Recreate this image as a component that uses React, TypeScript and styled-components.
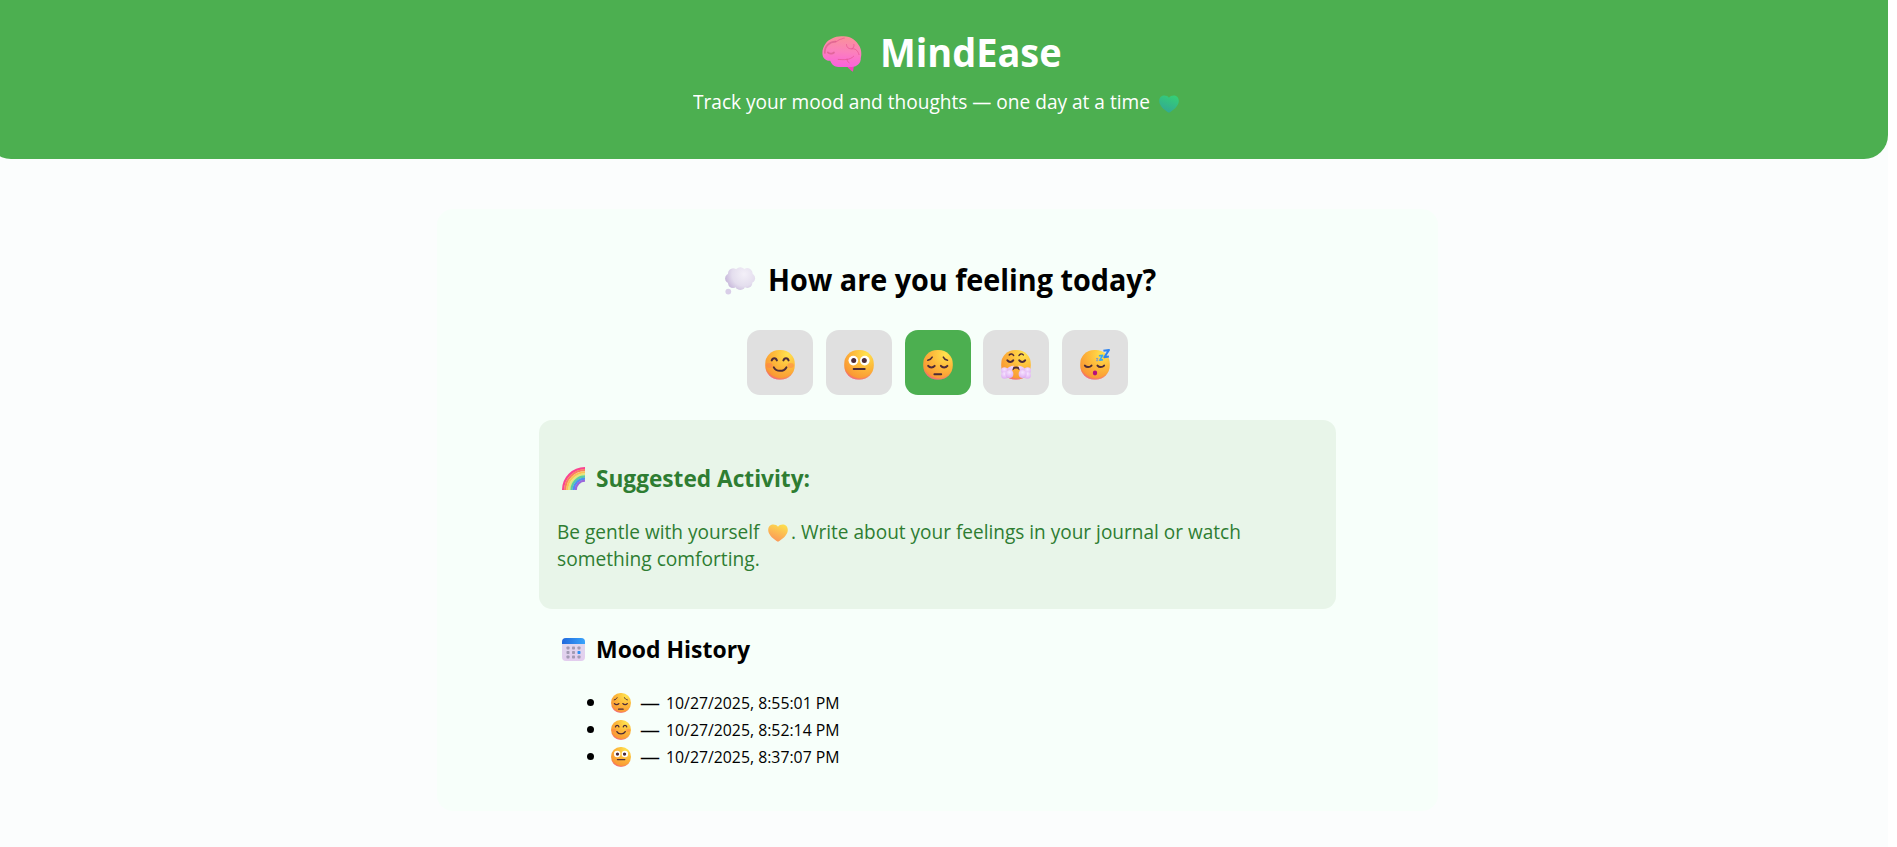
import React, { useLayoutEffect, useRef, useState } from "react";
import styled, { createGlobalStyle } from "styled-components";

const GlobalStyle = createGlobalStyle`
  * { box-sizing: border-box; }
  html, body { margin: 0; background: #fff; overflow: hidden; }
  body { font-family: "Open Sans", "Noto Sans", sans-serif; color: #000; }
`;

const Page = styled.div`
  width: 1888px;
  height: 847px;
  background: #fbfdfd;
`;

const Header = styled.header`
  display: flex;
  flex-direction: column;
  align-items: center;
  width: 1901px;
  height: 159px;
  margin-left: -13px;
  padding-top: 25px;
  border-radius: 0 0 24px 24px;
  background: #4caf50;
  color: #fff;
`;

const LineBox = styled.span<{ $w: number; $size: number; $bold?: boolean }>`
  display: block;
  flex: none;
  width: ${(p) => p.$w}px;
  font-size: ${(p) => p.$size}px;
  font-weight: ${(p) => (p.$bold ? 700 : 400)};
  line-height: inherit;
  white-space: nowrap;
`;

const LineText = styled.span`
  display: inline-block;
  vertical-align: top;
  transform-origin: 0 50%;
`;

/* A single line of text, condensed so that it fills exactly the given width. */
function Line({ w, size, bold, children }: { w: number; size: number; bold?: boolean; children: React.ReactNode }) {
  const ref = useRef<HTMLSpanElement>(null);
  const [scale, setScale] = useState(1);
  useLayoutEffect(() => {
    if (ref.current && ref.current.offsetWidth) setScale(w / ref.current.offsetWidth);
  }, [w]);
  return (
    <LineBox $w={w} $size={size} $bold={bold}>
      <LineText ref={ref} style={{ transform: `scaleX(${scale})` }}>{children}</LineText>
    </LineBox>
  );
}

const Brand = styled.h1`
  display: flex;
  align-items: center;
  gap: 18px;
  height: 54px;
  margin: 0;
  padding-left: 9px;
  line-height: 54px;
`;

const Tagline = styled.p`
  display: flex;
  align-items: center;
  gap: 9px;
  height: 27px;
  margin: 9px 0 0;
  padding-right: 3px;
  line-height: 27px;
`;

const Main = styled.main`
  width: 1001px;
  height: 602px;
  margin: 50px 0 0 437px;
  padding: 51px 102px 0;
  border-radius: 16px;
  background: #f7fffa;
`;

const Question = styled.h2`
  display: flex;
  align-items: center;
  justify-content: center;
  gap: 12px;
  height: 40px;
  margin: 0 0 30px;
  padding-left: 6px;
  line-height: 40px;
`;

const Moods = styled.div`
  display: flex;
  justify-content: center;
  gap: 12.8px;
`;

const MoodButton = styled.button<{ $active?: boolean }>`
  display: flex;
  align-items: center;
  justify-content: center;
  width: 66px;
  height: 65px;
  padding: 4px 0 0;
  border: 0;
  border-radius: 13px;
  background: ${(p) => (p.$active ? "#4caf50" : "#e0e0e0")};
`;

const Suggestion = styled.section`
  height: 189px;
  margin-top: 25px;
  padding: 42px 18px 0;
  border-radius: 13px;
  background: #e8f5e9;
  color: #2e7d32;
`;

const SectionTitle = styled.h3`
  display: flex;
  align-items: center;
  gap: 11px;
  height: 32px;
  margin: 0;
  padding-left: 5px;
  line-height: 32px;
`;

const Advice = styled.p`
  margin: 24px 0 0;
  line-height: 27px;
`;

const AdviceRow = styled.span`
  display: flex;
  align-items: center;
  height: 27px;
`;

const History = styled.section`
  padding: 24px 18px 0;
`;

const Entries = styled.ul`
  margin: 24px 0 0;
  padding: 0;
  list-style: none;
`;

const Entry = styled.li`
  display: flex;
  align-items: center;
  height: 27px;
  padding-left: 30px;
  line-height: 27px;
`;

const Bullet = styled.span`
  width: 7px;
  height: 7px;
  margin-right: 17px;
  border-radius: 50%;
  background: #000;
`;

const Dash = styled.span`
  width: 20px;
  margin: 0 6px 0 9px;
  font-size: 20px;
`;

const Icon = styled.svg<{ $m?: string }>`
  display: block;
  flex: none;
  overflow: visible;
  margin: ${(p) => p.$m || "0"};
`;

type Mood = "smile" | "neutral" | "pensive" | "steam" | "sleep";

function Face({ mood, size, id }: { mood: Mood; size: number; id: string }) {
  const ink = { fill: "none", stroke: "#4d2b38", strokeWidth: 2, strokeLinecap: "round" as const };
  return (
    <Icon width={size} height={size} viewBox="0 0 30 30" aria-label={mood}>
      <defs>
        <radialGradient id={id + "y"} cx="0.75" cy="0.15" r="0.98">
          <stop offset="0" stopColor="#ffe24e" />
          <stop offset="0.45" stopColor="#fdbb3b" />
          <stop offset="0.85" stopColor="#fa9a35" />
          <stop offset="1" stopColor="#f27350" />
        </radialGradient>
        <radialGradient id={id + "p"} cx="0.52" cy="0.38" r="0.64">
          <stop offset="0.86" stopColor="#f45c9a" stopOpacity="0" />
          <stop offset="1" stopColor="#f05cae" stopOpacity="0.85" />
        </radialGradient>
        <radialGradient id={id + "s"} cx="0.5" cy="0.3" r="0.75">
          <stop offset="0" stopColor="#f6e4ff" />
          <stop offset="1" stopColor="#dca9f2" />
        </radialGradient>
      </defs>
      <rect x="0.2" y="0" width="29.6" height="29.6" rx="14" fill={`url(#${id}y)`} />
      <rect x="0.2" y="0" width="29.6" height="29.6" rx="14" fill={`url(#${id}p)`} />
      {mood === "smile" && (
        <>
          <ellipse cx="4.4" cy="15.5" rx="3.2" ry="2.4" fill="#ff7355" opacity=".4" />
          <ellipse cx="25.6" cy="15.5" rx="3.2" ry="2.4" fill="#ff7355" opacity=".4" />
          <path d="M6.7 10.4c.8-3 4.4-3 5.2 0M18.4 10.4c.8-3 4.4-3 5.2 0M8.8 17.4c2.4 4.6 10 4.6 12.6 0" {...ink} />
        </>
      )}
      {mood === "neutral" && (
        <>
          <circle cx="9.3" cy="10.6" r="4.8" fill="#fff" />
          <circle cx="20.8" cy="10.6" r="4.8" fill="#fff" />
          <circle cx="9.7" cy="10.6" r="2.5" fill="#4d2b38" />
          <circle cx="20.3" cy="10.6" r="2.5" fill="#4d2b38" />
          <path d="M9.700 18.900h11" {...ink} />
        </>
      )}
      {mood === "pensive" && (
        <>
          <path d="M4.800 10.300c2.200-.4 3.600-1.600 4.400-3.200M20.300 7.100c.8 1.800 2.300 2.900 4.200 3.200" {...ink} strokeWidth={1.5} />
          <path d="M5.200 15.900c1.600 2 4.800 2 6.500 0M17.900 15.900c1.600 2 4.800 2 6.500 0M11.400 24.300h6.800" {...ink} />
        </>
      )}
      {mood === "steam" && (
        <>
          <path d="M8.200 5c1.500-1.800 3.800-1.100 4.400.6M18 5.600c.6-1.700 2.800-2.400 4.300-.7" {...ink} strokeWidth={1.4} />
          <path d="M6.400 10.400c1.400 2 4.400 2 5.800 0M18.300 10.400c1.400 2 4.400 2 5.800 0M12 19c.6-2 5.600-2 6.200 0" {...ink} />
          <g fill={`url(#${id}s)`}>
            <path d="M12.800 15.600 10.600 22 5 19.600c2-2.400 5-3.600 7.800-4Z M17.200 15.600 19.400 22 25 19.600c-2-2.400-5-3.600-7.800-4Z" />
            <circle cx="3.400" cy="20.600" r="3.300" />
            <circle cx="3.600" cy="25.300" r="3.500" />
            <circle cx="8.400" cy="24" r="4" />
            <circle cx="26.600" cy="20.600" r="3.300" />
            <circle cx="26.400" cy="25.300" r="3.500" />
            <circle cx="21.600" cy="24" r="4" />
          </g>
        </>
      )}
      {mood === "sleep" && (
        <>
          <path d="M4.900 15.600c1.600 2 4.800 2 6.600 0M17.500 15.600c1.600 2 4.800 2 6.600 0" {...ink} />
          <ellipse cx="15" cy="23" rx="2.2" ry="2.400" fill="#b50f7d" />
          <path d="M23.400.8 29 0l-4.700 7.200 4.600-.8" fill="none" stroke="#2d83f0" strokeWidth="2" strokeLinejoin="round" />
          <path d="M18.900 5.800l3.700-.4-2.800 4.700 3.200-.4" fill="none" stroke="#36aaf2" strokeWidth="1.6" strokeLinejoin="round" />
          <path d="M16 8.600l2-.2-1.500 2.400 1.800-.2" fill="none" stroke="#8b9ac8" strokeWidth="1" />
        </>
      )}
    </Icon>
  );
}

function Brain() {
  return (
    <Icon width="40" height="36" viewBox="0 0 40 36" $m="3px 0 0" aria-label="brain">
      <defs>
        <linearGradient id="brain" x1="0.55" y1="0" x2="0.45" y2="1">
          <stop offset="0" stopColor="#fa9297" />
          <stop offset="0.5" stopColor="#fb80bc" />
          <stop offset="1" stopColor="#fb61dc" />
        </linearGradient>
      </defs>
      <path d="M25 30.500 31.800 30.500 31 35.800C28.600 34.400 27.200 32.900 25 30.500Z" fill="#fa3fbd" />
      <path d="M20 .3C28.500-.5 34.700 5 37 9.500c2.300 3.100 2.900 8.800 1.800 12.600.3 5.200-3.600 8.900-9.200 8.800H16.200c-3.600 0-6.600-2.400-8-6.200C3.700 25 .5 21.800.4 17.400.4 10 5 4.600 10 2.600 13 .8 16.200.2 20 .3Z" fill="url(#brain)" />
      <path d="M2.800 17C2.500 10.300 7.300 6 13.500 5.700M12 16.500c-2 1.800-5 1.100-6.200-.2" fill="none" stroke="#d95f8e" strokeWidth="1.7" strokeLinecap="round" opacity=".75" />
      <path d="M13.500 5.700c2.200-.1 2.700-2 5-2.400s2.200-1.200 3.800-1.200M24.500 8.600c.3 3.200 2 4.300 5.500 4.200 4-.3 6 2.300 7 5.800M30 12.800c1.700-.8 2.300-2.700 1.900-4.300M16.200 23.400c5 .4 12 1 15.500-3.200M25 23c0 2 .9 3.100 2.100 3.800" fill="none" stroke="#e4528e" strokeWidth="1" strokeLinecap="round" opacity=".7" />
    </Icon>
  );
}

function Heart({ id, from, to, m }: { id: string; from: string; to: string; m?: string }) {
  return (
    <Icon width="20" height="18" viewBox="0 0 20 18" $m={m} aria-label="heart">
      <defs>
        <linearGradient id={id} x1="0.75" y1="0" x2="0.3" y2="1">
          <stop offset="0" stopColor={from} />
          <stop offset="1" stopColor={to} />
        </linearGradient>
      </defs>
      <path d="M10 2.700C12.200-.6 19.700-.8 19.800 6c0 5.400-6.200 9.800-9.800 11.800C6.400 15.800.2 11.400.2 6 .3-.8 7.800-.6 10 2.700Z" fill={`url(#${id})`} />
    </Icon>
  );
}

function Thought() {
  return (
    <Icon width="31" height="28" viewBox="0 0 31 28" $m="2px 0 0" aria-label="thought">
      <defs>
        <radialGradient id="cloud" gradientUnits="userSpaceOnUse" cx="19" cy="7" r="20">
          <stop offset="0" stopColor="#f3f0f8" />
          <stop offset="0.6" stopColor="#e4deee" />
          <stop offset="1" stopColor="#c5b5d9" />
        </radialGradient>
      </defs>
      <g fill="url(#cloud)">
        <rect x="5" y="4" width="20" height="15" rx="5" />
        <circle cx="15.300" cy="5.600" r="5.300" />
        <circle cx="8.300" cy="6.600" r="5.300" />
        <circle cx="22.300" cy="6.400" r="5.300" />
        <circle cx="5" cy="11.500" r="4.900" />
        <circle cx="25.200" cy="11.300" r="4.900" />
        <circle cx="8" cy="16.200" r="4.900" />
        <circle cx="22.400" cy="16" r="4.900" />
        <circle cx="15.300" cy="17.300" r="5.600" />
      </g>
      <circle cx="3.300" cy="24.600" r="2.900" fill="#d9cfe8" />
    </Icon>
  );
}

function Rainbow() {
  const bands = ["#fa4390", "#fb7d61", "#fcc254", "#e5e57b", "#5dce9e", "#4a91f3", "#9a68dc"];
  return (
    <Icon width="23" height="23" viewBox="0 0 23 23" aria-label="rainbow">
      {bands.map((c, i) => {
        const r = 21.9 - i * 2.1;
        return <path key={c} d={`M${23 - r} 23A${r} ${r} 0 0 1 23 ${23 - r}`} fill="none" stroke={c} strokeWidth="2.3" />;
      })}
    </Icon>
  );
}

function Calendar() {
  return (
    <Icon width="23" height="23" viewBox="0 0 23 23" aria-label="calendar">
      <defs>
        <linearGradient id="cal" x1="0" y1="0" x2="0" y2="1">
          <stop offset="0" stopColor="#dfdcee" />
          <stop offset="1" stopColor="#e3cdee" />
        </linearGradient>
        <linearGradient id="calTop" x1="0" y1="0" x2="1" y2="0">
          <stop offset="0" stopColor="#2169dc" />
          <stop offset="1" stopColor="#38a4fb" />
        </linearGradient>
      </defs>
      <rect width="23" height="23" rx="4" fill="url(#cal)" />
      <path d="M0 6V4a4 4 0 0 1 4-4h15a4 4 0 0 1 4 4v2Z" fill="url(#calTop)" />
      {[8.5, 13, 17.5].map((y) =>
        [4.5, 10, 15.5].map((x) => (
          <rect key={`${x}-${y}`} x={x} y={y} width="3" height="3" rx=".7" fill={x > 15 && y === 13 ? "#2f90f3" : "#a39bb4"} />
        ))
      )}
    </Icon>
  );
}

const moods: Mood[] = ["smile", "neutral", "pensive", "steam", "sleep"];
const history: { mood: Mood; at: string }[] = [
  { mood: "pensive", at: "10/27/2025, 8:55:01 PM" },
  { mood: "smile", at: "10/27/2025, 8:52:14 PM" },
  { mood: "neutral", at: "10/27/2025, 8:37:07 PM" },
];

export default function App() {
  return (
    <>
      <GlobalStyle />
      <Page>
        <Header>
          <Brand><Brain /><Line w={182} size={40} bold>MindEase</Line></Brand>
          <Tagline>
            <Line w={457} size={20}>Track your mood and thoughts — one day at a time</Line>
            <Heart id="green" from="#35cf76" to="#32a795" m="4px 0 0" />
          </Tagline>
        </Header>
        <Main>
          <Question><Thought /><Line w={388} size={30} bold>How are you feeling today?</Line></Question>
          <Moods>
            {moods.map((m) => (
              <MoodButton key={m} $active={m === "pensive"}><Face mood={m} size={30} id={"b" + m} /></MoodButton>
            ))}
          </Moods>
          <Suggestion>
            <SectionTitle><Rainbow /><Line w={214} size={23.4} bold>Suggested Activity:</Line></SectionTitle>
            <Advice>
              <AdviceRow>
                <Line w={202} size={20}>Be gentle with yourself</Line>
                <Heart id="yellow" from="#fdde4c" to="#fb9459" m="3px 3px 0 9px" />
                <Line w={450} size={20}>. Write about your feelings in your journal or watch</Line>
              </AdviceRow>
              <AdviceRow><Line w={203} size={20}>something comforting.</Line></AdviceRow>
            </Advice>
          </Suggestion>
          <History>
            <SectionTitle><Calendar /><Line w={154} size={23.4} bold>Mood History</Line></SectionTitle>
            <Entries>
              {history.map((h) => (
                <Entry key={h.at}>
                  <Bullet />
                  <Face mood={h.mood} size={20} id={"h" + h.mood} />
                  <Dash>—</Dash>
                  <Line w={174} size={17}>{h.at}</Line>
                </Entry>
              ))}
            </Entries>
          </History>
        </Main>
      </Page>
    </>
  );
}
